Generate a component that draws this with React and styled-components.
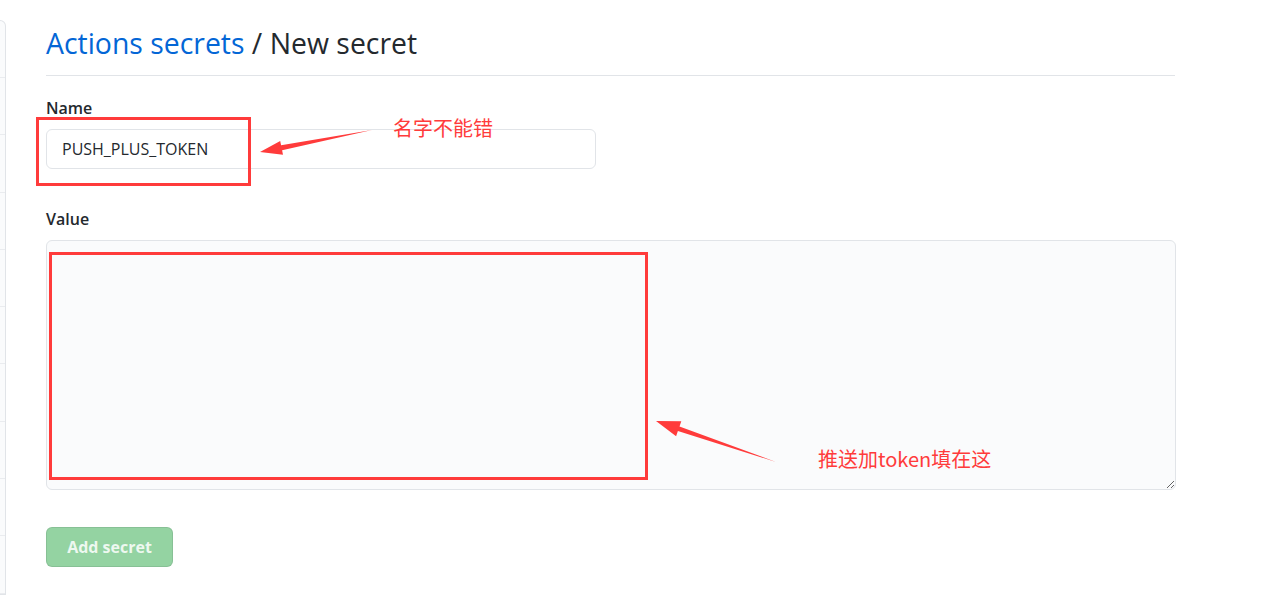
import React from "react";
import styled, { createGlobalStyle } from "styled-components";

const GlobalStyle = createGlobalStyle`
  body {
    margin: 0;
    background: #ffffff;
    font-family: "Open Sans", "Noto Sans", "Noto Sans CJK SC", sans-serif;
    color: #24292e;
  }
`;

function App() {
  return (
    <>
      <GlobalStyle />
      <Page>
        <Sidebar>
          {Array.from({ length: 10 }).map((_, i) => (
            <SideRow key={i} />
          ))}
        </Sidebar>
        <Main>
          <Header>
            <Crumb href="#">Actions secrets</Crumb> / New secret
          </Header>
          <Field>
            <Label>Name</Label>
            <Control>
              <NameInput defaultValue="PUSH_PLUS_TOKEN" />
              <Marker style={{ left: -10, top: -12, width: 215, height: 69 }} />
              <Callout style={{ left: 210, top: -12 }}>
                <svg width="120" height="30" viewBox="0 0 120 30">
                  <polygon
                    points="116,3 25.1,18.3 24.2,13.9 4,25 27,27.7 26.1,23.3"
                    fill="#ff3b3b"
                  />
                </svg>
                <Note>名字不能错</Note>
              </Callout>
            </Control>
          </Field>
          <Field>
            <Label>Value</Label>
            <Control>
              <ValueArea />
              <Marker style={{ left: 3, top: 12, width: 599, height: 228 }} />
              <Callout style={{ left: 606, top: 176 }} $low>
                <svg width="128" height="50" viewBox="0 0 128 50">
                  <polygon
                    points="124,46 25.9,15.1 24.1,20.3 4,5 29.3,5.2 27.5,10.4"
                    fill="#ff3b3b"
                  />
                </svg>
                <Note>推送加token填在这</Note>
              </Callout>
            </Control>
          </Field>
          <SubmitButton disabled>Add secret</SubmitButton>
        </Main>
      </Page>
    </>
  );
}

const Page = styled.div`
  display: flex;
  align-items: flex-start;
  height: 602px;
  overflow: hidden;
`;

const Sidebar = styled.div`
  width: 5px;
  margin-top: 20px;
  border: 1px solid #e1e4e8;
  border-left: none;
  border-top-right-radius: 6px;
  background: #fafbfc;
  display: flex;
  flex-direction: column;
`;

const SideRow = styled.div`
  height: 56.3px;
  border-bottom: 1px solid #eaecef;
  &:first-child {
    height: 56px;
  }
`;

const Main = styled.div`
  width: 1129px;
  margin-left: 40px;
  padding-top: 24px;
`;

const Header = styled.h2`
  margin: 0 0 22px;
  padding-bottom: 13px;
  border-bottom: 1px solid #e1e4e8;
  font-size: 28.4px;
  font-weight: 400;
  line-height: 38px;
  color: #24292e;
`;

const Crumb = styled.a`
  color: #0366d6;
  text-decoration: none;
`;

const Field = styled.div`
  margin-bottom: 40px;
  &:last-of-type {
    margin-bottom: 37px;
  }
`;

const Label = styled.div`
  font-size: 16px;
  font-weight: 600;
  line-height: 20px;
  margin-bottom: 11px;
  color: #24292e;
`;

const Control = styled.div`
  position: relative;
`;

const NameInput = styled.input`
  display: block;
  box-sizing: border-box;
  width: 550px;
  height: 40px;
  padding: 0 15px;
  font-family: inherit;
  font-size: 16px;
  color: #24292e;
  background: #ffffff;
  border: 1px solid #e1e4e8;
  border-radius: 6px;
  outline: none;
`;

const ValueArea = styled.textarea`
  display: block;
  box-sizing: border-box;
  width: 1130px;
  height: 250px;
  background: #fafbfc;
  border: 1px solid #e1e4e8;
  border-radius: 6px;
  resize: vertical;
  outline: none;
`;

const Marker = styled.div`
  position: absolute;
  box-sizing: border-box;
  border: 3px solid #ff3b3b;
  pointer-events: none;
`;

const Callout = styled.div`
  position: absolute;
  display: flex;
  align-items: flex-start;
  gap: ${(p) => (p.$low ? "32px" : "11px")};
  pointer-events: none;

  svg {
    flex: none;
    margin-top: ${(p) => (p.$low ? "0" : "10px")};
  }

  div {
    margin-top: ${(p) => (p.$low ? "31px" : "-1px")};
  }
`;

const Note = styled.div`
  font-family: "Noto Sans CJK SC", sans-serif;
  font-size: 20px;
  line-height: 24px;
  color: #ff3b3b;
  white-space: nowrap;
  margin-left: 6px;
`;

const SubmitButton = styled.button`
  display: block;
  width: 127px;
  height: 40px;
  padding: 0;
  font-family: inherit;
  font-size: 16px;
  font-weight: 700;
  color: rgba(255, 255, 255, 0.85);
  background: #94d3a2;
  border: 1px solid rgba(27, 31, 35, 0.1);
  border-radius: 6px;
`;

export default App;
